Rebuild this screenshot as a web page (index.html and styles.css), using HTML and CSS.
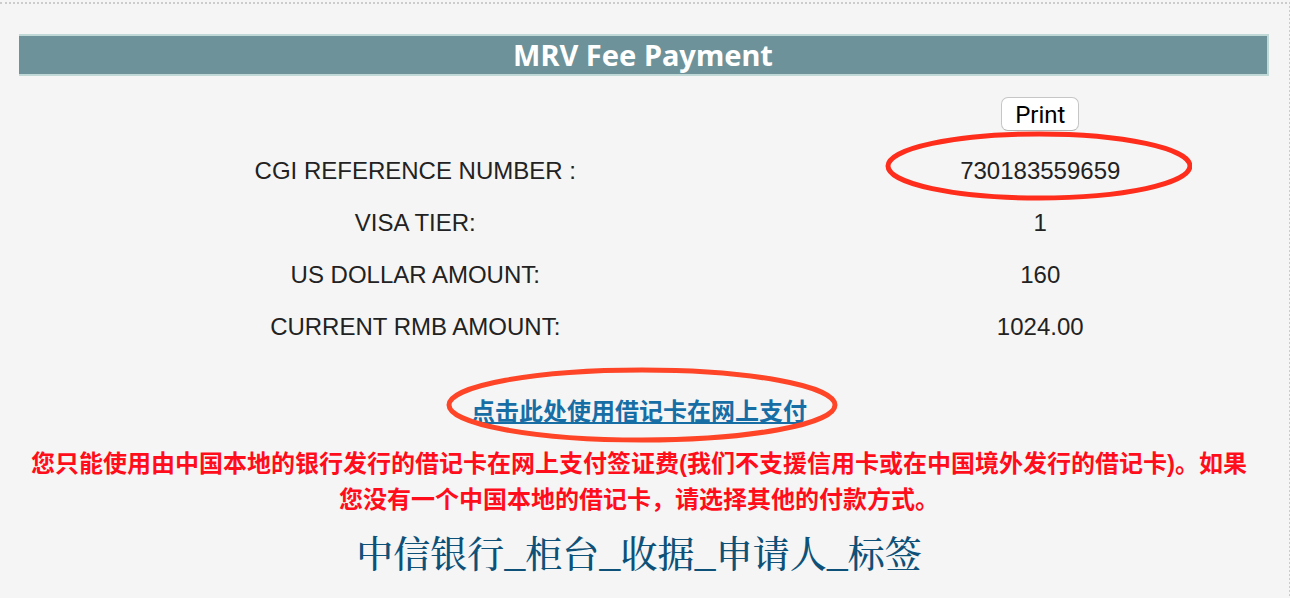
FILE: index.html
```html
<!DOCTYPE html>
<html lang="zh-CN">
<head>
<meta charset="utf-8">
<meta name="viewport" content="width=device-width, initial-scale=1">
<title>MRV Fee Payment</title>
<link rel="stylesheet" href="styles.css">
</head>
<body>
<main class="panel">
  <h1 class="panel-title">MRV Fee Payment</h1>
  <div class="toolbar"><button class="print-button" type="button">Print</button></div>
  <table class="details">
    <tbody>
      <tr>
        <th scope="row">CGI REFERENCE NUMBER :</th>
        <td>
          <span class="marked">730183559659
            <svg class="ring ring-number" viewBox="0 0 308 70" aria-hidden="true"><ellipse cx="155" cy="35" rx="151" ry="32" fill="none" stroke="#ff2d1c" stroke-width="5"/></svg>
          </span>
        </td>
      </tr>
      <tr><th scope="row">VISA TIER:</th><td>1</td></tr>
      <tr><th scope="row">US DOLLAR AMOUNT:</th><td>160</td></tr>
      <tr><th scope="row">CURRENT RMB AMOUNT:</th><td>1024.00</td></tr>
    </tbody>
  </table>
  <div class="notes">
    <p class="pay">
      <span class="marked"><a class="pay-link" href="#">点击此处使用借记卡在网上支付</a>
        <svg class="ring ring-link" viewBox="0 0 392 78" aria-hidden="true"><ellipse cx="196" cy="39" rx="193" ry="35" fill="none" stroke="#ff4528" stroke-width="5"/></svg>
      </span>
    </p>
    <p class="warning">您只能使用由中国本地的银行发行的借记卡在网上支付签证费(我们不支援信用卡或在中国境外发行的借记卡)。如果您没有一个中国本地的借记卡，请选择其他的付款方式。</p>
    <p class="caption">中信银行_柜台_收据_申请人_标签</p>
  </div>
</main>
</body>
</html>
```
FILE: styles.css
```css
* {
  box-sizing: border-box;
}

body {
  margin: 0;
  padding-top: 2px;
  overflow: hidden;
  background: #f5f5f5;
  color: #222;
  font: 24px/36px "Liberation Sans", "Noto Sans CJK SC", sans-serif;
}

.panel {
  min-height: 100vh;
  margin-right: -1px;
  padding: 30px 20px 0 19px;
  border-top: 2px dotted #ccc;
  border-right: 2px dotted #ccc;
}

.panel-title {
  margin: 0;
  border: 2px solid #c0d8d6;
  border-left: 0;
  background: #6d9299;
  color: #fff;
  font: bold 29px/38px "Noto Sans", "Open Sans", sans-serif;
  text-align: center;
}

.toolbar {
  display: flex;
  justify-content: center;
  width: 36.6%;
  margin: 21px 0 14px auto;
}

.print-button {
  height: 34px;
  padding: 1px 13px 0;
  border: 1px solid #c6c6c6;
  border-bottom-color: #b0b0b0;
  border-radius: 7px;
  background: #fff;
  color: #000;
  font: 24px/32px Roboto, sans-serif;
}

.details {
  width: 100%;
  border-collapse: collapse;
  table-layout: fixed;
  text-align: center;
}

.details th,
.details td {
  height: 52px;
  padding: 0;
  font-weight: normal;
}

.details th {
  width: 63.4%;
}

.marked {
  display: inline-block;
  position: relative;
}

.ring {
  position: absolute;
  pointer-events: none;
}

.ring-number {
  top: -22px;
  left: -76px;
  width: 308px;
  height: 70px;
}

.ring-link {
  top: -28px;
  left: -25px;
  width: 392px;
  height: 78px;
}

.notes {
  padding: 41px 18px 0 8px;
  text-align: center;
}

.notes p {
  margin: 0;
}

.notes .pay {
  margin-bottom: 16px;
}

.pay-link {
  color: #176ea5;
  font-weight: bold;
  text-decoration-thickness: 2px;
  text-underline-offset: 2px;
}

.warning {
  color: #ff0d1b;
  font-weight: bold;
}

.notes .caption {
  margin-top: 8px;
  color: #0e5178;
  font-family: "Noto Serif CJK SC", "Noto Sans CJK SC", serif;
  font-size: 37px;
  font-weight: 500;
  line-height: 52px;
}
```
